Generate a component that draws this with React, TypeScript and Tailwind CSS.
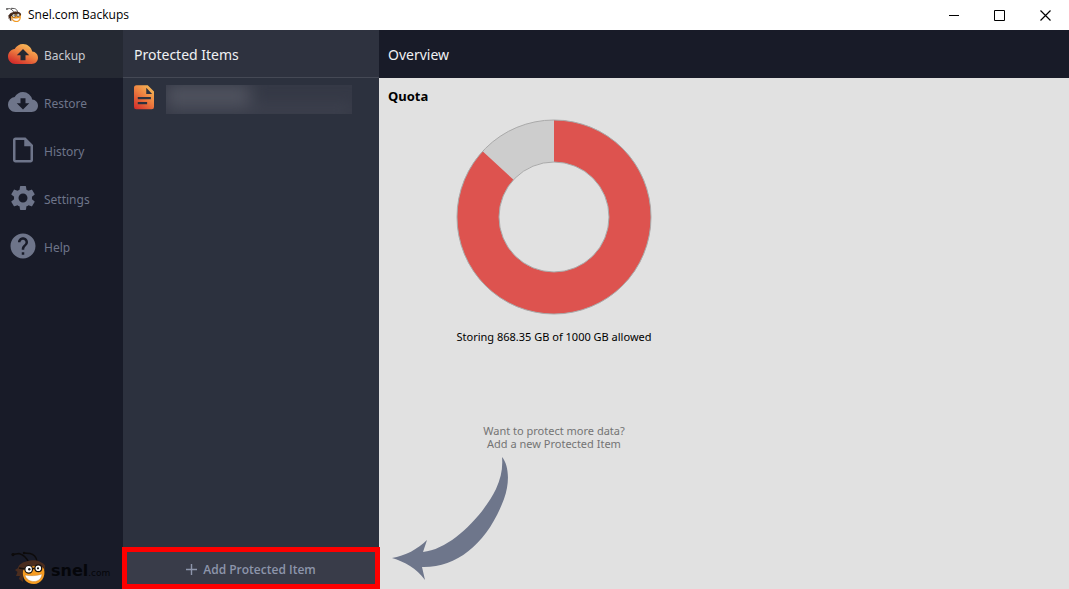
import clsx from "clsx";
import { ReactNode, useState } from "react";
import {
  MdCloudDownload,
  MdHelp,
  MdOutlineInsertDriveFile,
  MdSettings,
} from "react-icons/md";

const USED_GB = 868.35;
const TOTAL_GB = 1000;

const BeeHead = ({ className }: { className?: string }) => (
  <svg viewBox="0 0 36 34" className={className} aria-hidden="true">
    <path
      d="M18 12C16 7 13 4 8 2.500L1.500 3.500M26 11C26 6 22 3 19 2.500L13 2"
      fill="none"
      stroke="#0d0b0b"
      strokeWidth="1.500"
    />
    <circle cx="2" cy="3.600" r="1.600" fill="#0d0b0b" />
    <circle cx="13" cy="2" r="1.200" fill="#0d0b0b" />
    <path
      d="M4 19L7 17C8 13 12 11 17 10C23 8 31 10 34 14.500L33.500 19L12 20L12 31L8 28L9 25L5 25L6.500 21Z"
      fill="#4a2d1f"
    />
    <path
      d="M12 20C13 16 17 17 21 15.500C26 14 31 15 33 18C35 26 30 33 23 33C15 33 11 27 12 20Z"
      fill="#f79d22"
    />
    <path d="M8 17L14 18M21.500 17.500H24" stroke="#17120f" strokeWidth="1.500" />
    <circle cx="17.700" cy="18.300" r="3.800" fill="#fff" stroke="#17120f" strokeWidth="1.200" />
    <circle cx="27.300" cy="17.300" r="3.400" fill="#fff" stroke="#17120f" strokeWidth="1.200" />
    <circle cx="18.300" cy="18.300" r="1.200" fill="#111" />
    <circle cx="27" cy="17.300" r="1.100" fill="#111" />
    <path
      d="M14 24C19 25 26 25 31 23C30.500 28 27 30.500 23 30.500C18.500 30.500 15 28 14 24Z"
      fill="#fff"
      stroke="#b8701c"
      strokeWidth=".4"
    />
  </svg>
);

const BackupIcon = () => (
  <svg viewBox="0 0 24 24" className="size-[30px]" aria-hidden="true">
    <defs>
      <linearGradient id="cloud" x1="0.1" y1="1" x2="0.75" y2="0">
        <stop offset="0.1" stopColor="#d4302c" />
        <stop offset="0.55" stopColor="#ee8040" />
        <stop offset="1" stopColor="#f8c25c" />
      </linearGradient>
    </defs>
    <path
      fill="url(#cloud)"
      d="M19.350 10.040C18.670 6.590 15.640 4 12 4 9.110 4 6.600 5.640 5.350 8.040 2.340 8.360 0 10.910 0 14c0 3.310 2.690 6 6 6h13c2.760 0 5-2.240 5-5 0-2.640-2.050-4.780-4.650-4.960zM14 13v4h-4v-4H7l5-5 5 5h-3z"
    />
  </svg>
);

const DocumentIcon = () => (
  <svg viewBox="0 0 24 24" className="size-[30px]" aria-hidden="true">
    <defs>
      <linearGradient id="doc" x1="0.1" y1="1" x2="0.8" y2="0">
        <stop offset="0" stopColor="#d62f2b" />
        <stop offset="0.55" stopColor="#ee8040" />
        <stop offset="1" stopColor="#f6b957" />
      </linearGradient>
    </defs>
    <path
      fill="url(#doc)"
      fillRule="evenodd"
      d="M6 2.500h9l5 5v12.500a1.800 1.800 0 0 1-1.800 1.800H5.800A1.800 1.800 0 0 1 4 20V4.500a2 2 0 0 1 2-2zM13.800 4.500v5h4.700zM7 12v1.800h10.500V12zM7 16v1.800h7.500V16z"
    />
  </svg>
);

const menu: { label: string; icon: ReactNode }[] = [
  { label: "Backup", icon: <BackupIcon /> },
  { label: "Restore", icon: <MdCloudDownload size={30} /> },
  { label: "History", icon: <MdOutlineInsertDriveFile size={30} /> },
  { label: "Settings", icon: <MdSettings size={30} /> },
  { label: "Help", icon: <MdHelp size={30} /> },
];

const TitleBar = () => (
  <header className="flex h-[30px] items-center bg-white pl-1.5 font-['Open_Sans',sans-serif] text-black">
    <BeeHead className="size-4" />
    <h1 className="ml-1.5 flex-1 text-xs">Snel.com Backups</h1>
    <button aria-label="Minimize" className="flex h-full w-[45px] items-center justify-center">
      <svg viewBox="0 0 11 11" className="size-[11px]">
        <path d="M0 5.500H10" stroke="#000" />
      </svg>
    </button>
    <button aria-label="Maximize" className="flex h-full w-[45px] items-center justify-center">
      <svg viewBox="0 0 11 11" className="size-[11px]">
        <path d="M.5.5H10.500V10.500H.5Z" fill="none" stroke="#000" />
      </svg>
    </button>
    <button aria-label="Close" className="flex h-full w-[47px] items-center justify-center">
      <svg viewBox="0 0 11 11" className="size-[11px]">
        <path d="M.5.5L10.500 10.500M10.500.5L.5 10.500" stroke="#000" strokeWidth="1.200" />
      </svg>
    </button>
  </header>
);

const Sidebar = () => {
  const [active, setActive] = useState("Backup");

  return (
    <nav className="flex w-[123px] shrink-0 flex-col bg-[#181b28]">
      {menu.map(({ label, icon }) => (
        <button
          key={label}
          onClick={() => setActive(label)}
          className={clsx(
            "flex h-12 items-center gap-1.5 pl-2 text-xs",
            active === label ? "bg-[#252933] text-[#c8cad0]" : "text-[#6e758a]"
          )}
        >
          {icon}
          <span className="pt-1">{label}</span>
        </button>
      ))}
      <div className="mt-auto flex items-center gap-1 pb-1 pl-[11px] text-[#05060a]">
        <BeeHead className="h-[34px] w-9" />
        <p className="pt-1.5 font-['DejaVu_Sans',sans-serif] text-base font-bold">
          snel<span className="text-[9px] font-normal">.com</span>
        </p>
      </div>
    </nav>
  );
};

const ProtectedItems = () => (
  <section className="flex w-64 shrink-0 flex-col bg-[#2c313e]">
    <h2 className="flex h-12 items-center border-b border-[#454955] bg-[#2e323f] pt-0.5 pl-[11px] text-sm text-[#f0f1f3]">
      Protected Items
    </h2>
    <div className="flex gap-[7px] pt-1 pl-1.5">
      <DocumentIcon />
      <div className="mt-[3px] h-[29px] w-[186px] overflow-hidden bg-[#353946]">
        <div className="flex h-full flex-col justify-between blur-sm">
          <div className="h-5 w-[84px] bg-[#50535f]" />
          <div className="h-2 w-full bg-[#424552]" />
        </div>
      </div>
    </div>
    <div className="relative mt-auto">
      <button className="flex h-[39px] w-full items-center justify-center gap-1.5 bg-[#393c49] font-['Open_Sans',sans-serif] text-xs font-semibold text-[#8d95ab]">
        <svg viewBox="0 0 11 11" className="size-[11px]" aria-hidden="true">
          <path d="M5.500 0V11M0 5.500H11" stroke="currentColor" strokeWidth="1.400" />
        </svg>
        Add Protected Item
      </button>
      <div className="pointer-events-none absolute -inset-x-px -top-[3px] bottom-0 border-5 border-[#fe0000]" />
    </div>
  </section>
);

const QuotaChart = () => {
  const angle = (USED_GB / TOTAL_GB) * 2 * Math.PI;
  const at = (r: number) => `${98 + r * Math.sin(angle)} ${98 - r * Math.cos(angle)}`;

  return (
    <svg viewBox="0 0 196 196" className="size-[196px]" role="img" aria-label="Quota usage">
      <circle cx="98" cy="98" r="76" fill="none" stroke="#cdcdcd" strokeWidth="42" />
      <path
        d={`M98 1A97 97 0 1 1 ${at(97)}L${at(55)}A55 55 0 1 0 98 43Z`}
        fill="#dd534f"
      />
      <circle cx="98" cy="98" r="97" fill="none" stroke="#aaa" />
      <circle cx="98" cy="98" r="55" fill="none" stroke="#aaa" />
    </svg>
  );
};

const Overview = () => (
  <main className="flex min-w-0 flex-1 flex-col bg-[#e1e1e1]">
    <h2 className="flex h-12 items-center bg-[#181b28] pt-0.5 pl-[9px] text-sm text-[#f0f1f3]">
      Overview
    </h2>
    <div className="flex w-[350px] flex-col items-center">
      <h3 className="w-full pt-2 pl-[9px] text-[13px] leading-5 font-bold text-black">Quota</h3>
      <div className="mt-[13px]">
        <QuotaChart />
      </div>
      <p className="mt-3 text-[11px] leading-5 text-black">
        Storing {USED_GB} GB of {TOTAL_GB} GB allowed
      </p>
      <p className="mt-[77px] text-center text-[11px] leading-[13px] text-[#747474]">
        Want to protect more data?
        <br />
        Add a new Protected Item
      </p>
      <svg viewBox="390 456 120 126" className="mt-1.5 ml-[11px] h-[126px] w-[120px] self-start">
        <path
          d="M502 457C509 465 510 483 504 499C488 542 458 568 422 567L425 580C416 568 405 562 392 558C405 556 418 549 427 540L423 552C452 549 484 514 496 489C501 478 503 468 502 457Z"
          fill="#6e768b"
        />
      </svg>
    </div>
  </main>
);

export default function App() {
  return (
    <div className="flex min-h-screen flex-col font-['Noto_Sans',sans-serif]">
      <TitleBar />
      <div className="flex flex-1">
        <Sidebar />
        <ProtectedItems />
        <Overview />
      </div>
    </div>
  );
}
